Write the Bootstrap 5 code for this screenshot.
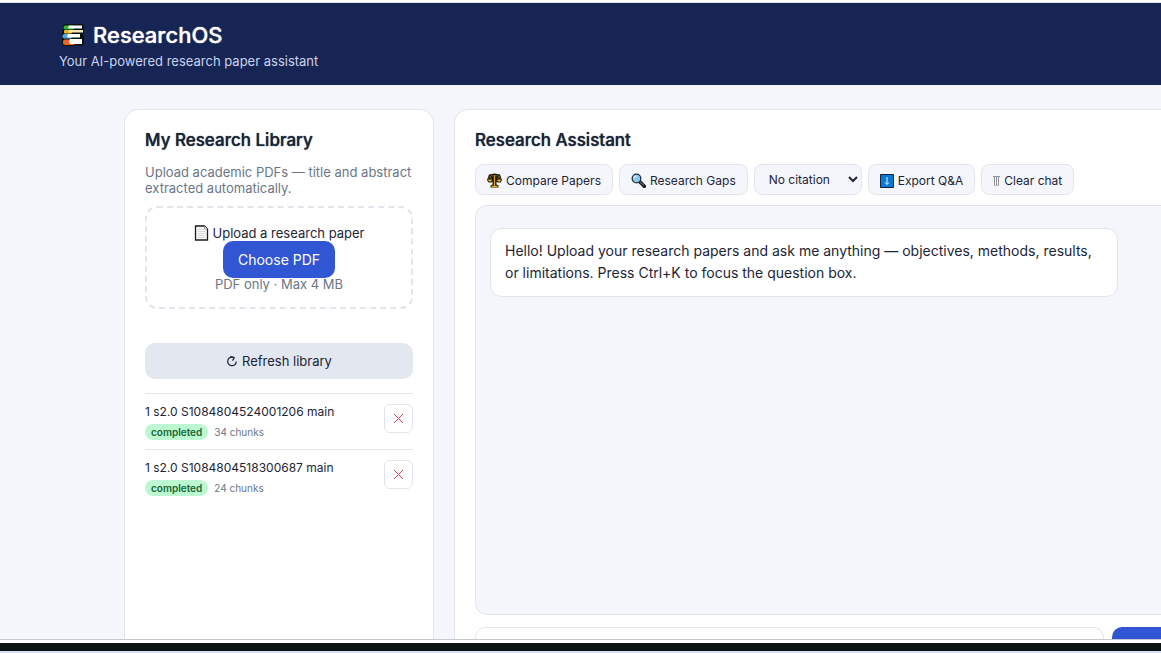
<!DOCTYPE html>
<html lang="en">
<head>
<meta charset="utf-8">
<meta name="viewport" content="width=device-width, initial-scale=1">
<title>ResearchOS</title>
<link href="https://cdn.jsdelivr.net/npm/bootstrap@5.3.0/dist/css/bootstrap.min.css" rel="stylesheet">
<style>
  :root { --ink: #1c2536; --muted: #6b7686; --line: #e2e5ec; --page: #f5f6fb; --brand: #3056d3; --navy: #172554; }
  body { font-family: Inter, "Liberation Sans", sans-serif; color: var(--ink); background: #fff; font-size: 13px; line-height: 16px; }
  svg { flex: none; }
  .app-view { background: var(--page); min-height: 0; border-bottom: 1px solid #c5c9cf; }
  .app-header { background: var(--navy); border-top: 1px solid #dfe3f2; margin-top: 2px; padding: 18px 59px 14px; }
  .app-header h1 { font-size: 22px; line-height: 28px; font-weight: 500; padding-left: 2px; text-shadow: 0 0 1px currentColor; }
  .app-header p { color: #c9d2ee; line-height: 20px; margin: 2px 0 0; }
  .workspace { padding: 24px 0 0 124px; gap: 20px; }
  .panel { background: #fff; border: 1px solid var(--line); border-radius: 14px; padding: 20px; }
  .library { width: 310px; }
  .assistant { min-width: 760px; }
  .panel h2 { font-size: 17px; line-height: 20px; font-weight: 500; text-shadow: 0 0 1px currentColor; margin: 0; }
  .intro { margin: 14px 0 10px; }
  .soft { color: var(--muted); }
  .drop-zone { border: 2px dashed var(--line); border-radius: 12px; padding: 17px 16px 16px; }
  .btn-brand { --bs-btn-color: #fff; --bs-btn-bg: var(--brand); --bs-btn-hover-bg: #2648b8; --bs-btn-hover-color: #fff; --bs-btn-border-radius: 10px; --bs-btn-font-size: 14px; --bs-btn-line-height: 21px; --bs-btn-padding-x: 14px; --bs-btn-padding-y: 7px; }
  .btn-refresh { --bs-btn-color: var(--ink); --bs-btn-bg: #e2e7f0; --bs-btn-hover-bg: #d5dbe7; --bs-btn-border-radius: 10px; --bs-btn-font-size: 13px; --bs-btn-line-height: 20px; --bs-btn-padding-y: 7px; margin: 34px 0 14px; }
  .paper { border-top: 1px solid var(--line); height: 56px; padding-top: 10px; }
  .paper-title { font-size: 12px; }
  .paper-meta { gap: 6px; margin-top: 4px; }
  .status { font-size: 10px; line-height: 12px; font-weight: 600; color: #166534; background: #bbf7d0; border-radius: 8px; padding: 2px 6px; }
  .chunks { font-size: 10px; line-height: 16px; }
  .btn-remove { width: 29px; height: 29px; border: 1px solid var(--line); border-radius: 6px; background: #fff; }
  .tools { gap: 6px; margin-top: 14px; }
  .tool, .tool:focus { height: 31px; border: 1px solid var(--line); border-radius: 8px; background-color: var(--page); color: var(--ink); font-size: 12px; line-height: 16px; padding: 2px 11px 0; white-space: nowrap; }
  select.tool { width: 108px; padding: 0 0 0 10px; }
  .chat-log { height: 410px; background: var(--page); border: 1px solid var(--line); border-radius: 12px; padding: 22px 14px; margin-top: 10px; }
  .message { max-width: 628px; background: #fff; border: 1px solid var(--line); border-radius: 12px; padding: 11px 14px 12px; font-size: 14px; line-height: 22px; }
  .ask { margin-top: 12px; }
  .ask .form-control { height: 40px; border-color: var(--line); border-radius: 10px; }
  .ask .btn { width: 81px; height: 40px; }
  .taskbar-edge { height: 8px; margin-top: 3px; background: #0d1213; }
  .desktop-edge { height: 2px; background: #d5e3ee; }
</style>
</head>
<body>
<div class="d-flex flex-column vh-100 overflow-hidden">
  <div class="app-view flex-grow-1 overflow-hidden d-flex flex-column">
    <div class="bg-white d-flex flex-column"><header class="app-header">
      <h1 class="d-flex align-items-center gap-2 text-white mb-0">
        <svg width="24" height="24" viewBox="0 0 24 24" aria-hidden="true">
          <path d="M4 1h18l1 3v6l-1 1 1 2v8l-2 2H3l-2-2v-5l1-2-1-2v-3l1-2V3z" fill="#0b1211"/>
          <rect x="2.500" y="2.500" width="11" height="4" rx="2" fill="#2fb52c"/><path d="M8 2.500h13v3H8l-1-1z" fill="#fff"/>
          <rect x="3" y="7" width="8" height="3.500" rx="1" fill="#e4b92e"/><path d="M8 7h14v2.500H8z" fill="#f1e8ae"/>
          <rect x="1.500" y="11" width="10" height="4.500" rx="2" fill="#4fa8df"/><path d="M7 11h12v3.500H7l-1-1z" fill="#fff"/>
          <rect x="2" y="16.500" width="12" height="5.500" rx="2" fill="#f1641f"/><path d="M9 16h12v5H9l-1-2z" fill="#fff"/>
        </svg>
        ResearchOS
      </h1>
      <p>Your AI-powered research paper assistant</p>
    </header></div>
    <main class="workspace d-flex flex-grow-1">
      <section class="panel library flex-shrink-0">
        <h2>My Research Library</h2>
        <p class="soft intro">Upload academic PDFs — title and abstract extracted automatically.</p>
        <div class="drop-zone text-center">
          <div class="d-flex justify-content-center align-items-center gap-1">
            <svg width="15" height="16" viewBox="0 0 15 16" aria-hidden="true"><path d="M1.500 1h9l3 3v11h-12z" fill="#f7f7f8" stroke="#1c1c20" stroke-width="1.300"/><path d="M10.500 1v3h3" fill="#ddd" stroke="#777" stroke-width=".6"/><path d="M3.500 4.500h6M3.500 6.500h8M3.500 8.500h8M3.500 10.500h8M3.500 12.500h8" stroke="#dcdce0"/></svg>
            <span>Upload a research paper</span>
          </div>
          <button type="button" class="btn btn-brand d-block mx-auto">Choose PDF</button>
          <div class="soft lh-1">PDF only · Max 4 MB</div>
        </div>
        <button type="button" class="btn btn-refresh w-100 d-flex justify-content-center align-items-center gap-1">
          <svg width="12" height="12" viewBox="0 0 12 12" fill="none" stroke="currentColor" stroke-width="1.200" aria-hidden="true"><path d="M8 2.600A4.300 4.300 0 1 0 10.300 6.500"/><path d="M4.500 1.200 8.300 2.700 6.500 5.600"/></svg>
          Refresh library
        </button>
        <div class="paper d-flex justify-content-between">
          <div><div class="paper-title">1 s2.0 S1084804524001206 main</div><div class="paper-meta d-flex align-items-center"><span class="status">completed</span><span class="chunks soft">34 chunks</span></div></div>
          <button type="button" class="btn-remove d-flex align-items-center justify-content-center p-0" aria-label="Remove paper"><svg width="11" height="11" viewBox="0 0 11 11" stroke="#dc4251" aria-hidden="true"><path d="m1 1 9 9M10 1l-9 9"/></svg></button>
        </div>
        <div class="paper d-flex justify-content-between">
          <div><div class="paper-title">1 s2.0 S1084804518300687 main</div><div class="paper-meta d-flex align-items-center"><span class="status">completed</span><span class="chunks soft">24 chunks</span></div></div>
          <button type="button" class="btn-remove d-flex align-items-center justify-content-center p-0" aria-label="Remove paper"><svg width="11" height="11" viewBox="0 0 11 11" stroke="#dc4251" aria-hidden="true"><path d="m1 1 9 9M10 1l-9 9"/></svg></button>
        </div>
      </section>
      <section class="panel assistant flex-grow-1">
        <h2>Research Assistant</h2>
        <div class="tools d-flex">
          <button type="button" class="tool d-flex align-items-center gap-1">
            <svg width="15" height="15" viewBox="0 0 15 15" aria-hidden="true"><path d="M2 1.500 7.500.500l5.500 1L15 7l-1.500 2.500h-3L9.500 8.500v3l2 1v2h-8v-2l2-1v-3l-1 1h-3L0 7z" fill="#191711"/><path d="M7.500 2v11M4.500 13.500h6" stroke="#dca51c" stroke-width="1.300"/><path d="M3 3 1.200 6.500h3.600zM12 3l-1.800 3.500h3.600zM3 3q4.500-1 9 0" fill="none" stroke="#8a6b22" stroke-width=".7"/><path d="M1 7h4l-1 1.500H2zM10 7h4l-1 1.500h-2z" fill="#edbd38"/></svg>
            Compare Papers</button>
          <button type="button" class="tool d-flex align-items-center gap-1">
            <svg width="15" height="15" viewBox="0 0 15 15" aria-hidden="true"><path d="m8.500 8.500 4.800 4.800" stroke="#17191c" stroke-width="3.500" stroke-linecap="round"/><path d="m9 9 3.800 3.500" stroke="#5e6369" stroke-width="1.200"/><circle cx="5.500" cy="5.500" r="4.300" fill="#86c9ef" stroke="#2b3036" stroke-width="1.300"/><path d="M3 5.500A2.500 2.500 0 0 1 5.500 3" fill="none" stroke="#def3ff" stroke-width="1.200"/></svg>
            Research Gaps</button>
          <select class="tool" aria-label="Citation style"><option>No citation</option><option>APA</option><option>MLA</option></select>
          <button type="button" class="tool d-flex align-items-center gap-1">
            <svg width="14" height="14" viewBox="0 0 14 14" aria-hidden="true"><path d="M.500.500h13v13H.500z" fill="#0878d6" stroke="#10253a"/><path d="M7 3v7M5 8.500l2 2 2-2" fill="none" stroke="#e8f6ff"/></svg>
            Export Q&amp;A</button>
          <button type="button" class="tool d-flex align-items-center gap-1">
            <svg width="7" height="10" viewBox="0 0 7 10" aria-hidden="true"><path d="M0 .500h7M1.500 1v8M3.500 1v8M5.500 1v8" fill="none" stroke="#929299"/><path d="M1 9.500h5" stroke="#bbbbc2"/></svg>
            Clear chat</button>
        </div>
        <div class="chat-log"><div class="message">Hello! Upload your research papers and ask me anything — objectives, methods, results, or limitations. Press Ctrl+K to focus the question box.</div></div>
        <form class="ask d-flex gap-2"><input type="text" class="form-control" aria-label="Question"><button type="submit" class="btn btn-brand flex-shrink-0" aria-label="Ask"></button></form>
      </section>
    </main>
  </div>
  <div class="taskbar-edge flex-shrink-0"></div>
  <div class="desktop-edge flex-shrink-0"></div>
</div>
<script src="https://cdn.jsdelivr.net/npm/bootstrap@5.3.0/dist/js/bootstrap.bundle.min.js"></script>
</body>
</html>
